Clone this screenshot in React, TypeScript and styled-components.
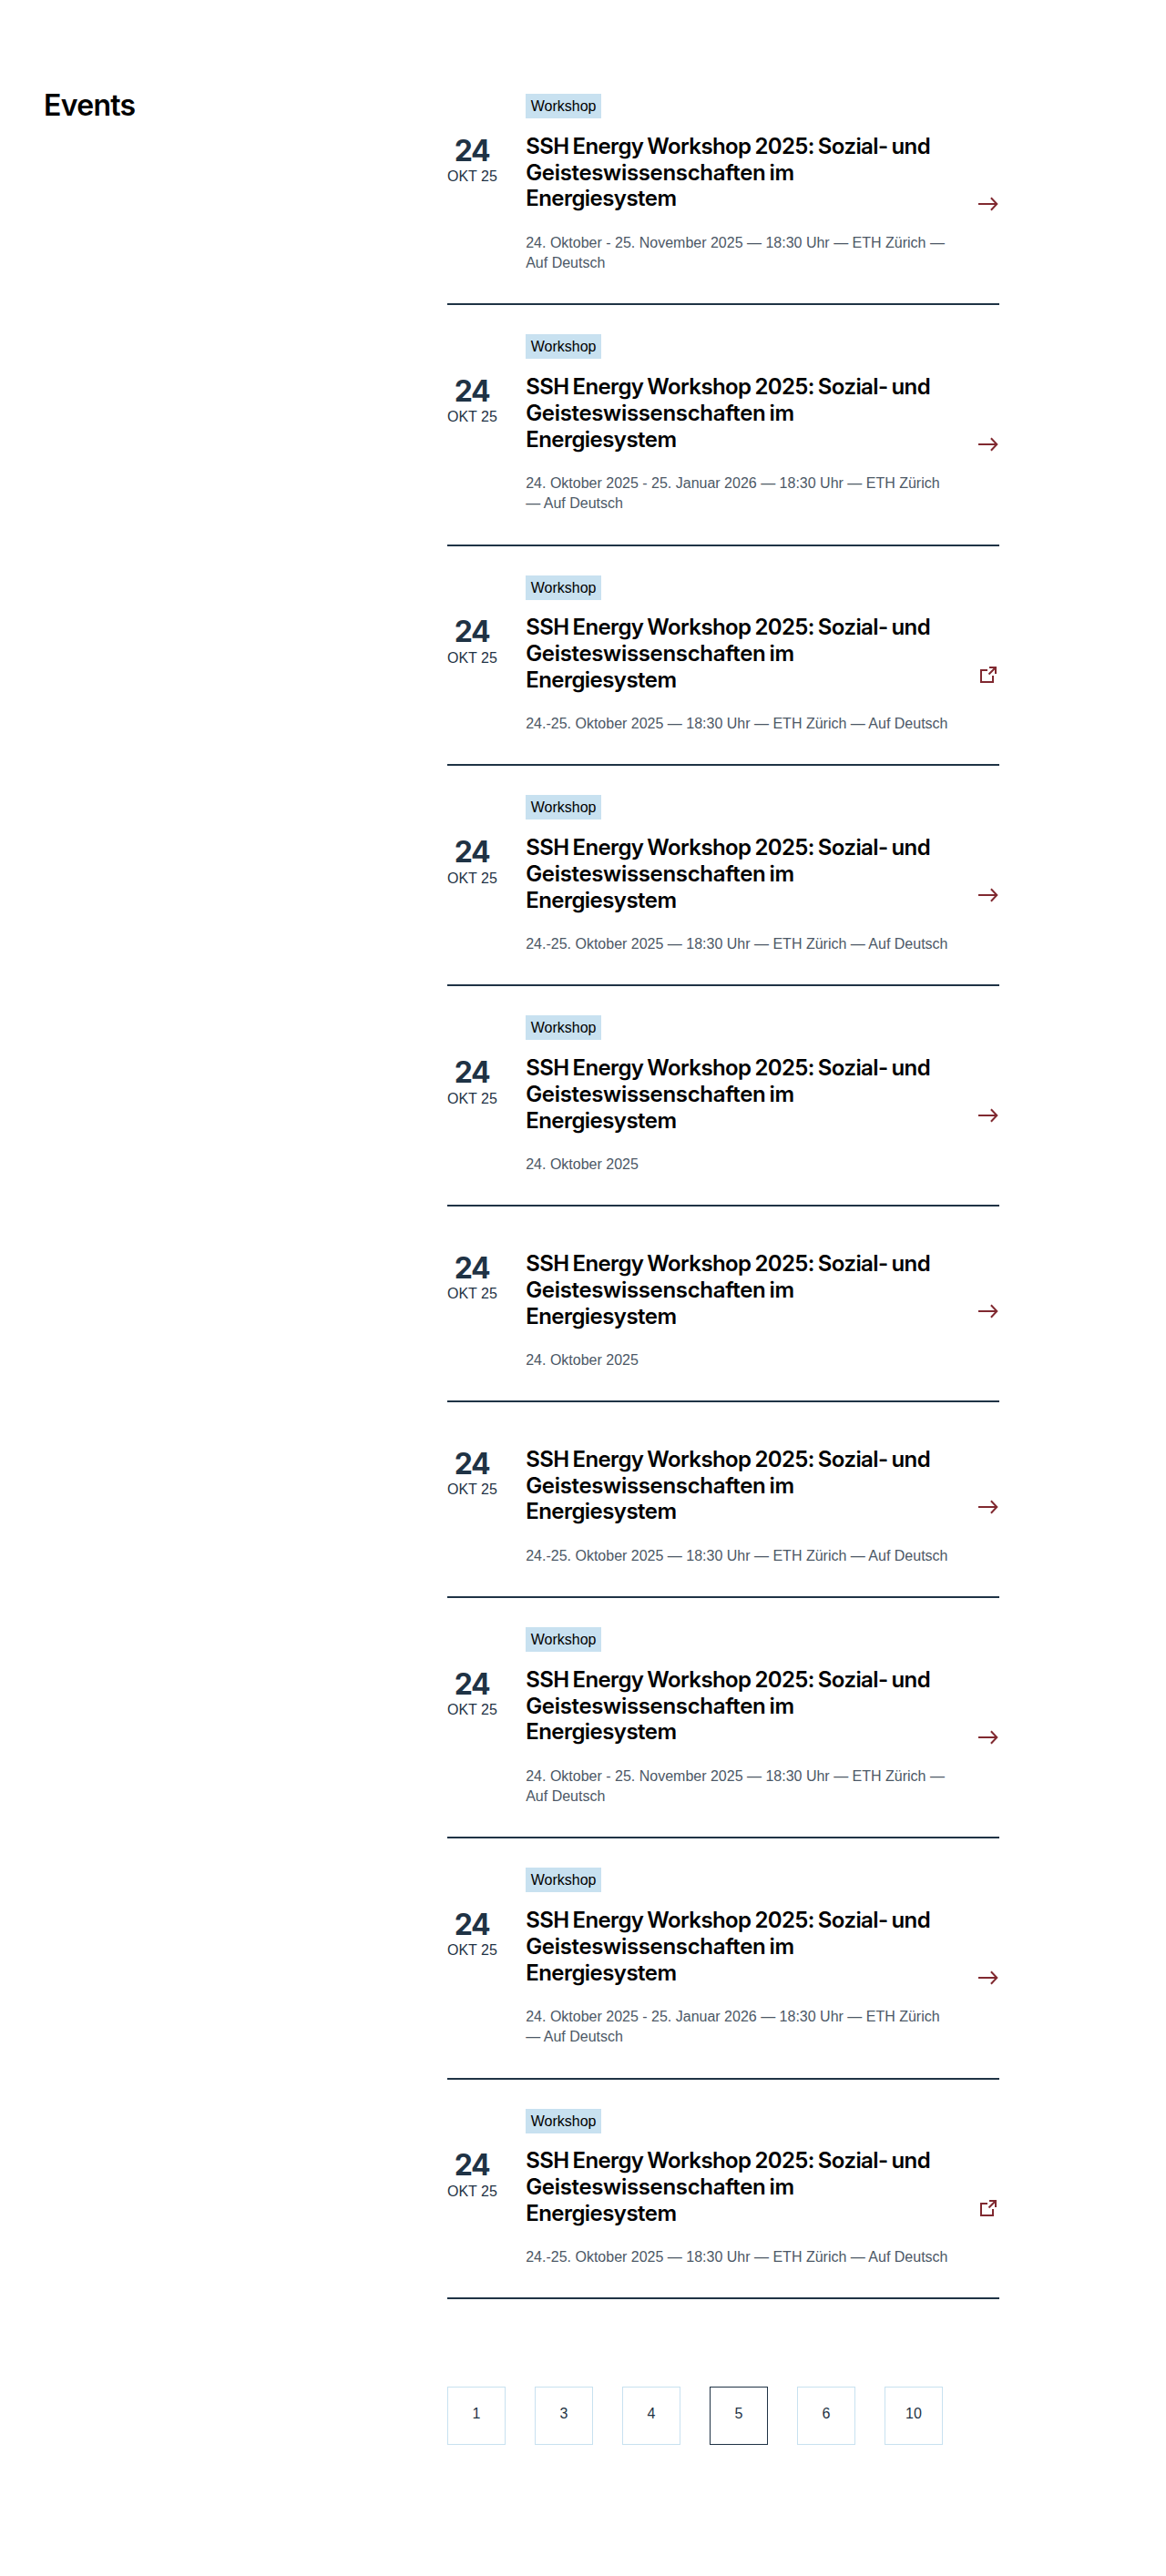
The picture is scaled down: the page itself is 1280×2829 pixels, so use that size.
import React from "react";
import styled, { createGlobalStyle } from "styled-components";

const navy = "#1f3345";
const sky = "#c8e1f0";
const wine = "#802930";
const display = `Inter, "Liberation Sans", Arial, sans-serif`;

const GlobalStyle = createGlobalStyle`
  *, *::before, *::after { box-sizing: border-box; }
  body {
    margin: 0;
    background: #fff;
    color: #000;
    font-family: "Liberation Sans", Arial, Helvetica, sans-serif;
    font-size: 16px;
    line-height: 1.4;
  }
`;

const Page = styled.main`
  display: grid;
  grid-template-columns: 443px 606px;
  align-items: start;
  padding: 71px 0 143.4px 48px;
`;

const SectionTitle = styled.h2`
  margin: 26px 0 0;
  font-family: ${display};
  font-size: 32px;
  font-weight: 600;
  line-height: 38.4px;
  letter-spacing: -0.7px;
`;

const EventList = styled.ul`
  margin: 0;
  padding: 0;
  list-style: none;
`;

const EventItem = styled.li`
  display: grid;
  grid-template-columns: 54.2px 463.8px 24px;
  grid-template-rows: auto auto;
  column-gap: 32px;
  padding: 32px 0 32.9px;
  border-bottom: 2px solid ${navy};
`;

const Tag = styled.span`
  grid-column: 2;
  grid-row: 1;
  justify-self: start;
  height: 27px;
  padding: 0 5.6px;
  background: ${sky};
  line-height: 27px;
`;

const DateBlock = styled.div`
  grid-column: 1;
  grid-row: 2;
  margin-top: 16.8px;
  color: ${navy};
  text-align: center;
  white-space: nowrap;
`;

const Day = styled.div`
  font-family: ${display};
  font-size: 32px;
  font-weight: 700;
  line-height: 38.4px;
  letter-spacing: -1.2px;
`;

const Month = styled.div`
  line-height: 17px;
`;

const Details = styled.div`
  grid-column: 2;
  grid-row: 2;
  margin-top: 16.8px;
`;

const EventTitle = styled.h3`
  margin: 0 0 22.4px;
  font-family: ${display};
  font-size: 24px;
  font-weight: 600;
  line-height: 28.8px;
  word-spacing: -1.5px;
  white-space: nowrap;
`;

const TitleLine = styled.span<{ $tracking: number }>`
  display: block;
  letter-spacing: ${(p) => p.$tracking}px;
`;

const Meta = styled.p`
  margin: 0 -4px 0 0;
  color: #4c5866;
  line-height: 22.4px;
`;

const EventIcon = styled.svg`
  grid-column: 3;
  grid-row: 2;
  align-self: center;
  width: 24px;
  height: 24px;
  margin-top: 17.2px;
  fill: none;
  stroke: ${wine};
  stroke-width: 2;
`;

const Pagination = styled.nav`
  display: flex;
  gap: 32px;
  margin-top: 96px;
`;

const PageLink = styled.a<{ $current: boolean }>`
  display: flex;
  align-items: center;
  justify-content: center;
  width: 64px;
  height: 64px;
  padding-bottom: 4px;
  border: 1px solid ${(p) => (p.$current ? navy : sky)};
  color: ${navy};
`;

type EventEntry = { meta: string; tag?: boolean; external?: boolean };

const longNovember = "24. Oktober - 25. November 2025 — 18:30 Uhr — ETH Zürich — Auf Deutsch";
const longJanuary = "24. Oktober 2025 - 25. Januar 2026 — 18:30 Uhr — ETH Zürich — Auf Deutsch";
const weekend = "24.-25. Oktober 2025 — 18:30 Uhr — ETH Zürich — Auf Deutsch";
const singleDay = "24. Oktober 2025";

const events: EventEntry[] = [
  { meta: longNovember, tag: true },
  { meta: longJanuary, tag: true },
  { meta: weekend, tag: true, external: true },
  { meta: weekend, tag: true },
  { meta: singleDay, tag: true },
  { meta: singleDay },
  { meta: weekend },
  { meta: longNovember, tag: true },
  { meta: longJanuary, tag: true },
  { meta: weekend, tag: true, external: true },
];

const ArrowIcon = () => (
  <EventIcon viewBox="0 0 24 24" aria-hidden="true">
    <path d="M1 12H21.5M14.9 5.3L21.3 12L14.9 18.7" />
  </EventIcon>
);

const ExternalIcon = () => (
  <EventIcon viewBox="0 0 24 24" aria-hidden="true">
    <path d="M11 7H4V20H17V13M13 4H20V11M20 4L12.5 11.5" />
  </EventIcon>
);

const EventRow = ({ meta, tag, external }: EventEntry) => (
  <EventItem>
    {tag && <Tag>Workshop</Tag>}
    <DateBlock>
      <Day>24</Day>
      <Month>OKT 25</Month>
    </DateBlock>
    <Details>
      <EventTitle>
        <TitleLine $tracking={-0.6}>SSH Energy Workshop 2025: Sozial- und</TitleLine>
        <TitleLine $tracking={-0.33}>Geisteswissenschaften im</TitleLine>
        <TitleLine $tracking={-0.55}>Energiesystem</TitleLine>
      </EventTitle>
      <Meta>{meta}</Meta>
    </Details>
    {external ? <ExternalIcon /> : <ArrowIcon />}
  </EventItem>
);

export default function App() {
  return (
    <>
      <GlobalStyle />
      <Page>
        <SectionTitle>Events</SectionTitle>
        <div>
          <EventList>
            {events.map((event, i) => (
              <EventRow key={i} {...event} />
            ))}
          </EventList>
          <Pagination>
            {[1, 3, 4, 5, 6, 10].map((n) => (
              <PageLink key={n} $current={n === 5}>
                {n}
              </PageLink>
            ))}
          </Pagination>
        </div>
      </Page>
    </>
  );
}
